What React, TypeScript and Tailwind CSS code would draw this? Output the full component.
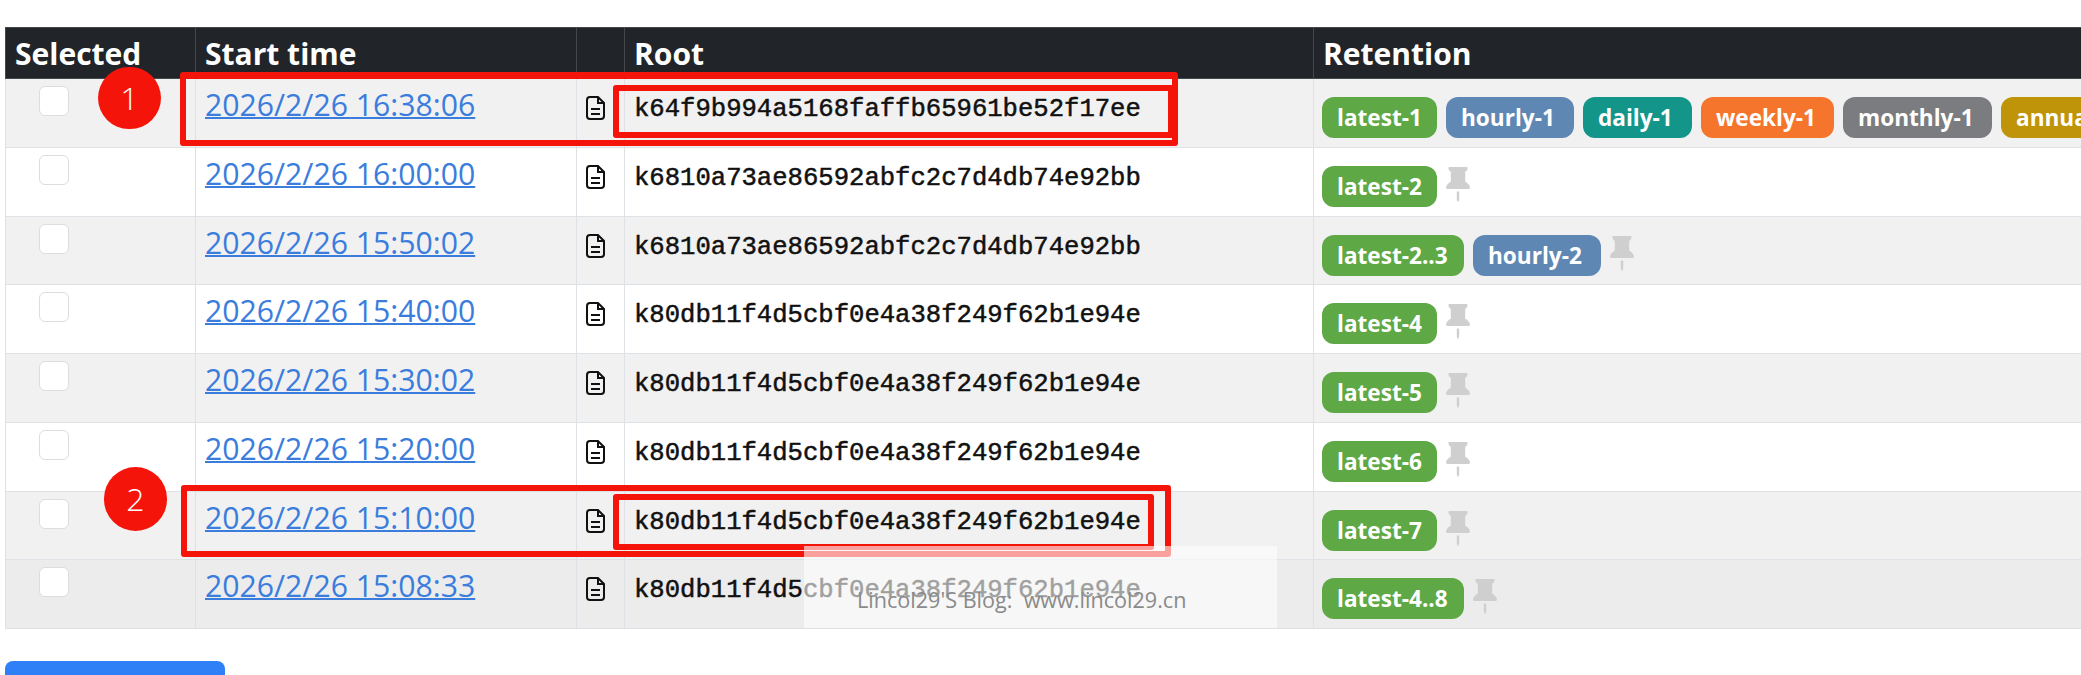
const rows = [
  { time: "2026/2/26 16:38:06", root: "k64f9b994a5168faffb65961be52f17ee", tags: ["latest-1", "hourly-1", "daily-1", "weekly-1", "monthly-1", "annual-1"], pinned: false },
  { time: "2026/2/26 16:00:00", root: "k6810a73ae86592abfc2c7d4db74e92bb", tags: ["latest-2"], pinned: true },
  { time: "2026/2/26 15:50:02", root: "k6810a73ae86592abfc2c7d4db74e92bb", tags: ["latest-2..3", "hourly-2"], pinned: true },
  { time: "2026/2/26 15:40:00", root: "k80db11f4d5cbf0e4a38f249f62b1e94e", tags: ["latest-4"], pinned: true },
  { time: "2026/2/26 15:30:02", root: "k80db11f4d5cbf0e4a38f249f62b1e94e", tags: ["latest-5"], pinned: true },
  { time: "2026/2/26 15:20:00", root: "k80db11f4d5cbf0e4a38f249f62b1e94e", tags: ["latest-6"], pinned: true },
  { time: "2026/2/26 15:10:00", root: "k80db11f4d5cbf0e4a38f249f62b1e94e", tags: ["latest-7"], pinned: true },
  { time: "2026/2/26 15:08:33", root: "k80db11f4d5cbf0e4a38f249f62b1e94e", tags: ["latest-4..8"], pinned: true },
];

function tagStyle(tag: string) {
  if (tag.includes("..")) return "w-[142px] bg-[#5fa846]";
  if (tag.startsWith("latest")) return "w-[115px] bg-[#5fa846]";
  if (tag.startsWith("hourly")) return "w-[128px] bg-[#5f87b4]";
  if (tag.startsWith("daily")) return "w-[109px] bg-[#14958a]";
  if (tag.startsWith("weekly")) return "w-[133px] bg-[#f5752c]";
  if (tag.startsWith("monthly")) return "w-[149px] bg-[#7b7c80]";
  return "w-[130px] bg-[#c09408]";
}

function FileIcon() {
  return (
    <svg viewBox="0 0 19 24" className="block h-[24px] w-[19px]" fill="none" stroke="#111" strokeWidth="2">
      <path d="M4 1h8l6 6v13a3 3 0 0 1-3 3H4a3 3 0 0 1-3-3V4a3 3 0 0 1 3-3z" />
      <path d="M12 1v6h6M5 13h9M5 18h9" />
    </svg>
  );
}

function PinIcon() {
  return (
    <svg viewBox="3 0 10 16" preserveAspectRatio="none" className="mt-[1px] block h-[35px] w-[24px] shrink-0" fill="#cfcfcf">
      <path d="M4.146.146A.5.5 0 0 1 4.5 0h7a.5.5 0 0 1 .5.5c0 .68-.342 1.174-.646 1.479-.126.125-.25.224-.354.298v4.431l.078.048c.203.127.476.314.751.555C12.36 7.775 13 8.527 13 9.5a.5.5 0 0 1-.5.5h-9a.5.5 0 0 1-.5-.5c0-.973.64-1.725 1.17-2.189A6 6 0 0 1 5 6.708V2.277a3 3 0 0 1-.354-.298C4.342 1.674 4 1.179 4 .5a.5.5 0 0 1 .146-.354z" />
      <path d="M7.5 11.2h1v3.3c0 .276-.224 1.5-.5 1.5s-.5-1.224-.5-1.5z" />
    </svg>
  );
}

export default function App() {
  return (
    <div className="relative h-[675px] w-[2081px] overflow-hidden bg-white pl-[5px] pt-[27px] font-['Open_Sans',sans-serif]">
      <table className="w-[2300px] table-fixed border-collapse">
        <colgroup>
          <col className="w-[190px]" />
          <col className="w-[381px]" />
          <col className="w-[48px]" />
          <col className="w-[689px]" />
          <col />
        </colgroup>
        <thead>
          <tr className="h-[51px] bg-[#212529] text-left text-[30px] leading-[36px] text-white">
            <th className="border border-[#44484b] px-[9px] pt-[2px] font-bold">Selected</th>
            <th className="border border-[#44484b] px-[9px] pt-[2px] font-bold">Start time</th>
            <th className="border border-[#44484b]" />
            <th className="border border-[#44484b] px-[9px] pt-[2px] font-bold">Root</th>
            <th className="border border-[#44484b] px-[9px] pt-[2px] font-bold">Retention</th>
          </tr>
        </thead>
        <tbody>
          {rows.map((row, i) => (
            <tr key={row.time} className={`h-[68.75px] ${i === 7 ? "bg-[#ececec]" : i % 2 === 0 ? "bg-[#f1f1f1]" : "bg-white"}`}>
              <td className="border border-[#dee2e6] pl-[33px] pt-[7px] align-top">
                <div className="h-[30px] w-[30px] rounded-[6px] border border-[#dddddd] bg-white" />
              </td>
              <td className="border border-[#dee2e6] px-[9px] pt-[7px] align-top">
                <a href="#" className="text-[30.2px] leading-[38px] text-[#3b7ddd] underline decoration-2">{row.time}</a>
              </td>
              <td className="border border-[#dee2e6] pl-[9px] pt-[17px] align-top">
                <FileIcon />
              </td>
              <td className="border border-[#dee2e6] px-[9px] pt-[15px] align-top font-['Liberation_Mono',monospace] text-[25.6px] leading-[32px] text-[#111] [-webkit-text-stroke:0.5px_#111]">
                {row.root}
              </td>
              <td className="border border-[#dee2e6] px-[8px] pt-[18px] align-top">
                <div className="flex items-start gap-[9px]">
                  {row.tags.map((tag) => (
                    <span key={tag} className={`h-[41px] shrink-0 rounded-[12px] pl-[15px] text-[22.6px] font-bold leading-[42px] whitespace-nowrap text-white ${tagStyle(tag)}`}>
                      {tag}
                    </span>
                  ))}
                  {row.pinned && <PinIcon />}
                </div>
              </td>
            </tr>
          ))}
        </tbody>
      </table>

      <button className="mt-[32px] h-[50px] w-[220px] rounded-[8px] bg-[#2f7ff6]" />

      <div className="absolute left-[180px] top-[72px] h-[74px] w-[998px] rounded-[3px] border-[6px] border-t-[7px] border-[#f5140a]" />
      <div className="absolute left-[613px] top-[85px] h-[53px] w-[561px] rounded-[3px] border-[6px] border-[#f5140a]" />
      <div className="absolute left-[181px] top-[485px] h-[72px] w-[990px] rounded-[3px] border-[6px] border-[#f5140a]" />
      <div className="absolute left-[613px] top-[494px] h-[56px] w-[541px] rounded-[3px] border-[6px] border-[#f5140a]" />

      <div className="absolute left-[98px] top-[67px] flex h-[62px] w-[63px] items-center justify-center rounded-full bg-[#f5140a] text-[32px] font-light text-white">1</div>
      <div className="absolute left-[104px] top-[467px] flex h-[64px] w-[63px] items-center justify-center rounded-full bg-[#f5140a] text-[32px] font-light text-white">2</div>

      <div className="absolute left-[804px] top-[546px] flex h-[82px] w-[473px] items-end bg-white/60 pb-[12px] pl-[53px] text-[21.6px] text-[#8a8a8a]">
        Lincol29'S Blog:&nbsp; www.lincol29.cn
      </div>
    </div>
  );
}
